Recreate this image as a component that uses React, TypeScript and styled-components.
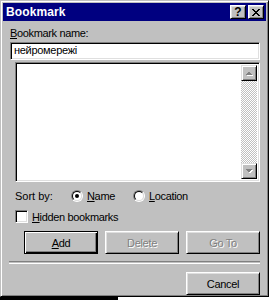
import React from "react";
import styled, { createGlobalStyle } from "styled-components";

const GlobalStyle = createGlobalStyle`
	html, body {
		margin: 0;
		padding: 0;
		background: #fff;
	}
	body {
		font-family: "Liberation Sans", Arial, sans-serif;
		font-size: 11px;
		color: #000;
	}
`;

const Window = styled.div`
	width: 269px;
	height: 297px;
	box-sizing: border-box;
	background: #c0c0c0;
	border: 1px solid;
	border-color: #c0c0c0 #000 #000 #c0c0c0;
	box-shadow: inset 1px 1px #fff, inset -1px -1px #808080;
	padding: 2px;
	display: flex;
	flex-direction: column;
`;

const TitleBar = styled.div`
	height: 18px;
	flex: none;
	background: #000080;
	display: flex;
	align-items: center;
	padding: 0 2px 0 3px;
`;

const TitleText = styled.div`
	flex: 1;
	color: #fff;
	font-weight: bold;
	font-size: 12px;
	letter-spacing: 0.1px;
`;

const Bevel = `
	box-sizing: border-box;
	background: #c0c0c0;
	border: 1px solid;
	border-color: #fff #000 #000 #fff;
	box-shadow: inset 1px 1px #dfdfdf, inset -1px -1px #808080;
`;

const CaptionButton = styled.div<{ $gap?: number }>`
	${Bevel}
	width: 16px;
	height: 14px;
	margin-left: ${({ $gap }) => $gap ?? 0}px;
	display: flex;
	align-items: center;
	justify-content: center;
	font-weight: bold;
	font-size: 12px;
	line-height: 1;
`;

const Content = styled.div`
	display: flex;
	flex-direction: column;
	padding: 0 6px 0 7px;
`;

const Label = styled.div`
	margin-top: 6px;
	height: 13px;
	line-height: 13px;
	letter-spacing: -0.35px;
`;

const Sunken = `
	box-sizing: border-box;
	border: 1px solid;
	border-color: #808080 #fff #fff #808080;
	box-shadow: inset 1px 1px #000, inset -1px -1px #dfdfdf;
	background: #fff;
`;

const TextInput = styled.div`
	${Sunken}
	margin-top: 2px;
	height: 18px;
	padding: 0 3px;
	line-height: 15px;
	letter-spacing: -0.3px;
`;

const ListBox = styled.div`
	${Sunken}
	margin: 2px 0 0 5px;
	height: 120px;
	padding: 2px;
	display: flex;
`;

const ListArea = styled.div`
	flex: 1;
`;

const ScrollBar = styled.div`
	width: 16px;
	display: flex;
	flex-direction: column;
`;

const ScrollButton = styled.div`
	width: 16px;
	height: 16px;
	box-sizing: border-box;
	background: #c0c0c0;
	border: 1px solid;
	border-color: #dfdfdf #000 #000 #dfdfdf;
	box-shadow: inset 1px 1px #fff, inset -1px -1px #808080;
	display: flex;
	align-items: center;
	justify-content: center;
`;

const ScrollTrack = styled.div`
	flex: 1;
	background-color: #fff;
	background-image: repeating-conic-gradient(#c0c0c0 0% 25%, #fff 0% 50%);
	background-size: 2px 2px;
`;

const OptionRow = styled.div<{ $top: number; $height: number }>`
	margin: ${({ $top }) => $top}px 0 0 5px;
	height: ${({ $height }) => $height}px;
	display: flex;
	align-items: center;
	letter-spacing: -0.35px;
`;

const SortLabel = styled.div`
	width: 56px;
	letter-spacing: 0;
`;

const RadioItem = styled.label<{ $width?: number }>`
	display: flex;
	align-items: center;
	width: ${({ $width }) => ($width ? `${$width}px` : "auto")};
`;

const RadioOuter = styled.span`
	width: 12px;
	height: 12px;
	box-sizing: border-box;
	border-radius: 50%;
	border: 1px solid;
	border-color: #808080 #fff #fff #808080;
	display: flex;
	margin-right: 4px;
`;

const RadioInner = styled.span`
	flex: 1;
	border-radius: 50%;
	border: 1px solid;
	border-color: #000 #dfdfdf #dfdfdf #000;
	background: #fff;
	display: flex;
	align-items: center;
	justify-content: center;
`;

const RadioDot = styled.span`
	width: 4px;
	height: 4px;
	border-radius: 50%;
	background: #000;
`;

const CheckBox = styled.span`
	${Sunken}
	width: 13px;
	height: 13px;
	margin-right: 4px;
`;

const ButtonRow = styled.div<{ $top: number }>`
	margin-top: ${({ $top }) => $top}px;
	display: flex;
	justify-content: flex-end;
	gap: 7px;
`;

const Button = styled.div<{ $default?: boolean; $disabled?: boolean }>`
	${Bevel}
	width: 74px;
	height: 23px;
	display: flex;
	align-items: center;
	justify-content: center;
	letter-spacing: -0.3px;
	color: ${({ $disabled }) => ($disabled ? "#808080" : "#000")};
	text-shadow: ${({ $disabled }) => ($disabled ? "1px 1px 0 #fff" : "none")};
	${({ $default }) =>
		$default &&
		`
		border-color: #000;
		box-shadow: inset 1px 1px #fff, inset -1px -1px #000, inset -2px -2px #808080;
	`}
`;

const Separator = styled.div`
	margin: 7px 0 0 -1px;
	height: 1px;
	border-top: 1px solid #808080;
	border-bottom: 1px solid #fff;
`;

const Below = styled.div`
	height: 6px;
	background: #fff;
`;

const BelowBar = styled.div`
	width: 118px;
	height: 3px;
	background: #000;
`;

function CloseGlyph() {
	return (
		<svg width="8" height="7" viewBox="0 0 8 7" shapeRendering="crispEdges">
			<path
				d="M0 0h2v1H0zM6 0h2v1H6zM1 1h2v1H1zM5 1h2v1H5zM2 2h4v1H2zM3 3h2v1H3zM2 4h4v1H2zM1 5h2v1H1zM5 5h2v1H5zM0 6h2v1H0zM6 6h2v1H6z"
				fill="#000"
			/>
		</svg>
	);
}

function Arrow({ down }: { down?: boolean }) {
	const pts = down ? "0,0 7,0 3.5,3.5" : "0,4 7,4 3.5,0.5";
	return (
		<svg width="8" height="5" viewBox="0 0 8 5" shapeRendering="crispEdges">
			<polygon points={pts} fill="#fff" transform="translate(1,1)" />
			<polygon points={pts} fill="#808080" />
		</svg>
	);
}

export default function App() {
	return (
		<>
			<GlobalStyle />
			<Window>
				<TitleBar>
					<TitleText>Bookmark</TitleText>
					<CaptionButton>?</CaptionButton>
					<CaptionButton $gap={2}>
						<CloseGlyph />
					</CaptionButton>
				</TitleBar>
				<Content>
					<Label>
						<u>B</u>ookmark name:
					</Label>
					<TextInput>нейромережі</TextInput>
					<ListBox>
						<ListArea />
						<ScrollBar>
							<ScrollButton>
								<Arrow />
							</ScrollButton>
							<ScrollTrack />
							<ScrollButton>
								<Arrow down />
							</ScrollButton>
						</ScrollBar>
					</ListBox>
					<OptionRow $top={7} $height={14}>
						<SortLabel>Sort by:</SortLabel>
						<RadioItem $width={62}>
							<RadioOuter>
								<RadioInner>
									<RadioDot />
								</RadioInner>
							</RadioOuter>
							<span>
								<u>N</u>ame
							</span>
						</RadioItem>
						<RadioItem>
							<RadioOuter>
								<RadioInner />
							</RadioOuter>
							<span>
								<u>L</u>ocation
							</span>
						</RadioItem>
					</OptionRow>
					<OptionRow $top={7} $height={13}>
						<CheckBox />
						<span>
							<u>H</u>idden bookmarks
						</span>
					</OptionRow>
					<ButtonRow $top={8}>
						<Button $default>
							<span>
								<u>A</u>dd
							</span>
						</Button>
						<Button $disabled>Delete</Button>
						<Button $disabled>Go To</Button>
					</ButtonRow>
					<Separator />
					<ButtonRow $top={8}>
						<Button>Cancel</Button>
					</ButtonRow>
				</Content>
			</Window>
			<Below>
				<BelowBar />
			</Below>
		</>
	);
}
